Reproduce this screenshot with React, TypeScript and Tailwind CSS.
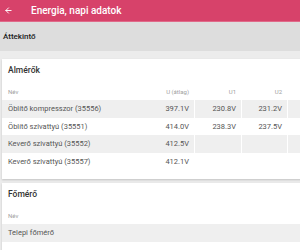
import { ArrowLeft } from "lucide-react";

type Row = { name: string; u: string; u1?: string; u2?: string };

const almerok: Row[] = [
  { name: "Öblítő kompresszor (35556)", u: "397.1V", u1: "230.8V", u2: "231.2V" },
  { name: "Öblítő szivattyú (35551)", u: "414.0V", u1: "238.3V", u2: "237.5V" },
  { name: "Keverő szivattyú (35552)", u: "412.5V" },
  { name: "Keverő szivattyú (35557)", u: "412.1V" },
];

const cols = "grid grid-cols-[145px_47px_47px_46px_46px]";

function Card({ title, rows, withValues }: { title: string; rows: Row[]; withValues: boolean }) {
  return (
    <div className="w-[360px] bg-white shadow-[0_1px_2px_rgba(0,0,0,0.18)] pb-[9px]">
      <div className="h-[24px] flex items-end pl-[6px] pb-[6px] text-[8.5px] font-medium text-[#333]">{title}</div>
      <div className={`${cols} h-[17px] items-center text-[6px] text-[#a0a0a0]`}>
        <div className="pl-[6px]">Név</div>
        {withValues && (
          <>
            <div className="text-right pr-[5px]">U (átlag)</div>
            <div className="text-right pr-[5px]">U1</div>
            <div className="text-right pr-[5px]">U2</div>
            <div />
          </>
        )}
      </div>
      {rows.map((r, i) => (
        <div
          key={r.name}
          className={`${cols} h-[17.5px] items-stretch text-[7.5px] text-[#555] ${i % 2 === 0 ? "bg-[#efefef]" : "bg-white"}`}
        >
          <div className="pl-[6px] flex items-center">{r.name}</div>
          {withValues && (
            <>
              <div className="flex items-center justify-end pr-[5px]">{r.u}</div>
              <div className="flex items-center justify-end pr-[5px] border-l border-white">{r.u1}</div>
              <div className="flex items-center justify-end pr-[5px] border-l border-white">{r.u2}</div>
              <div className="border-l border-white" />
            </>
          )}
        </div>
      ))}
    </div>
  );
}

export default function App() {
  return (
    <div className="w-[300px] h-[250px] overflow-hidden bg-[#ececec] font-['Roboto',sans-serif]">
      {/* Toolbar */}
      <div className="h-[22px] bg-[#d7426a] border-b border-[#e06a8a] flex items-center">
        <ArrowLeft className="w-[9px] h-[9px] ml-[4px] text-white" strokeWidth={2.5} />
        <span className="ml-[18px] text-[10px] font-medium text-white">Energia, napi adatok</span>
      </div>

      {/* Tab bar */}
      <div className="h-[29px] bg-[#dddddd] flex items-center pl-[3px] text-[8px] font-medium text-[#222]">
        Áttekintő
      </div>

      <div className="pt-[8px] pl-[2px] flex flex-col gap-[4px]">
        <Card title="Almérők" rows={almerok} withValues />
        <Card title="Főmérő" rows={[{ name: "Telepi főmérő", u: "" }]} withValues={false} />
      </div>
    </div>
  );
}
